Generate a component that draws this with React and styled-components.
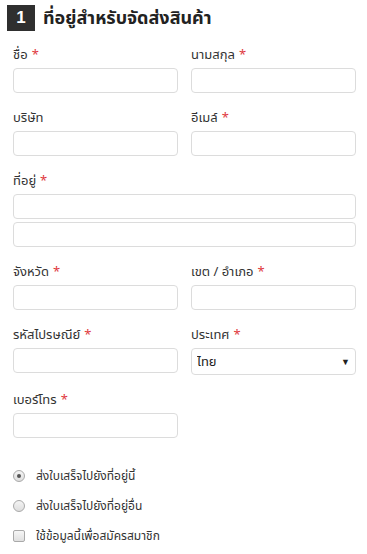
import React from 'react';
import styled, { createGlobalStyle } from 'styled-components';

const GlobalStyle = createGlobalStyle`
  body {
    margin: 0;
    background: #ffffff;
    font-family: Tahoma, "Noto Sans Thai", "Noto Sans", "Liberation Sans", sans-serif;
    color: #333333;
  }
`;

const Wrapper = styled.div`
  width: 367px;
  padding: 5px 0 0 0;
`;

const Heading = styled.div`
  display: flex;
  align-items: center;
  gap: 8px;
  margin-left: 7px;
  height: 26px;
`;

const StepBox = styled.div`
  width: 28px;
  height: 26px;
  background: #2f2f2f;
  color: #ffffff;
  font-family: "Liberation Sans", Arial, sans-serif;
  font-weight: bold;
  font-size: 17px;
  display: flex;
  align-items: center;
  justify-content: center;
`;

const Title = styled.h2`
  margin: 0;
  font-size: 18px;
  font-weight: bold;
  color: #222222;
`;

const Form = styled.div`
  display: grid;
  grid-template-columns: 165px 165px;
  column-gap: 13px;
  row-gap: 12px;
  padding: 11px 0 0 13px;
`;

const Field = styled.div`
  display: flex;
  flex-direction: column;
  grid-column: ${(p) => (p.wide ? '1 / span 2' : 'auto')};
`;

const Label = styled.label`
  font-size: 13px;
  line-height: 20px;
  height: 20px;
  padding-top: 3px;
  margin-bottom: 3px;
  color: #333333;
`;

const Star = styled.span`
  color: #e0393e;
  margin-left: 4px;
`;

const Input = styled.input`
  box-sizing: border-box;
  height: 25px;
  width: 100%;
  border: 1px solid #dcdcdc;
  border-radius: 4px;
  background: #ffffff;
  margin: 0 0 ${(p) => (p.stack ? '3px' : '0')} 0;
  padding: 0 6px;
  font-size: 13px;
`;

const SelectWrap = styled.div`
  position: relative;
  height: 27px;
`;

const Select = styled.select`
  appearance: none;
  box-sizing: border-box;
  width: 100%;
  height: 27px;
  border: 1px solid #dcdcdc;
  border-radius: 4px;
  background: #ffffff;
  padding: 0 5px;
  font-family: inherit;
  font-size: 13px;
  color: #222222;
`;

const Arrow = styled.span`
  position: absolute;
  right: 6px;
  top: 7px;
  font-size: 9px;
  color: #222222;
  pointer-events: none;
`;

const Options = styled.div`
  display: flex;
  flex-direction: column;
  gap: 12px;
  padding: 29px 0 0 13px;
`;

const Option = styled.div`
  display: flex;
  align-items: center;
  gap: 11px;
  height: 18px;
  font-size: 12px;
  color: #333333;
`;

const Radio = styled.span`
  box-sizing: border-box;
  width: 12px;
  height: 12px;
  border-radius: 50%;
  border: 1px solid #a9a9a9;
  background: linear-gradient(#f4f4f4, #dedede);
  display: flex;
  align-items: center;
  justify-content: center;
  &::after {
    content: '';
    width: 4px;
    height: 4px;
    border-radius: 50%;
    background: ${(p) => (p.checked ? '#555555' : 'transparent')};
  }
`;

const Check = styled.span`
  box-sizing: border-box;
  width: 12px;
  height: 12px;
  border-radius: 2px;
  border: 1px solid #a9a9a9;
  background: linear-gradient(#f6f6f6, #e0e0e0);
`;

function App() {
  return (
    <Wrapper>
      <GlobalStyle />
      <Heading>
        <StepBox>1</StepBox>
        <Title>ที่อยู่สำหรับจัดส่งสินค้า</Title>
      </Heading>
      <Form>
        <Field>
          <Label>ชื่อ<Star>*</Star></Label>
          <Input />
        </Field>
        <Field>
          <Label>นามสกุล<Star>*</Star></Label>
          <Input />
        </Field>
        <Field>
          <Label>บริษัท</Label>
          <Input />
        </Field>
        <Field>
          <Label>อีเมล์<Star>*</Star></Label>
          <Input />
        </Field>
        <Field wide>
          <Label>ที่อยู่<Star>*</Star></Label>
          <Input stack />
          <Input />
        </Field>
        <Field>
          <Label>จังหวัด<Star>*</Star></Label>
          <Input />
        </Field>
        <Field>
          <Label>เขต / อำเภอ<Star>*</Star></Label>
          <Input />
        </Field>
        <Field>
          <Label>รหัสไปรษณีย์<Star>*</Star></Label>
          <Input />
        </Field>
        <Field>
          <Label>ประเทศ<Star>*</Star></Label>
          <SelectWrap>
            <Select defaultValue="th">
              <option value="th">ไทย</option>
            </Select>
            <Arrow>▼</Arrow>
          </SelectWrap>
        </Field>
        <Field>
          <Label>เบอร์โทร<Star>*</Star></Label>
          <Input />
        </Field>
      </Form>
      <Options>
        <Option><Radio checked />ส่งใบเสร็จไปยังที่อยู่นี้</Option>
        <Option><Radio />ส่งใบเสร็จไปยังที่อยู่อื่น</Option>
        <Option><Check />ใช้ข้อมูลนี้เพื่อสมัครสมาชิก</Option>
      </Options>
    </Wrapper>
  );
}

export default App;
